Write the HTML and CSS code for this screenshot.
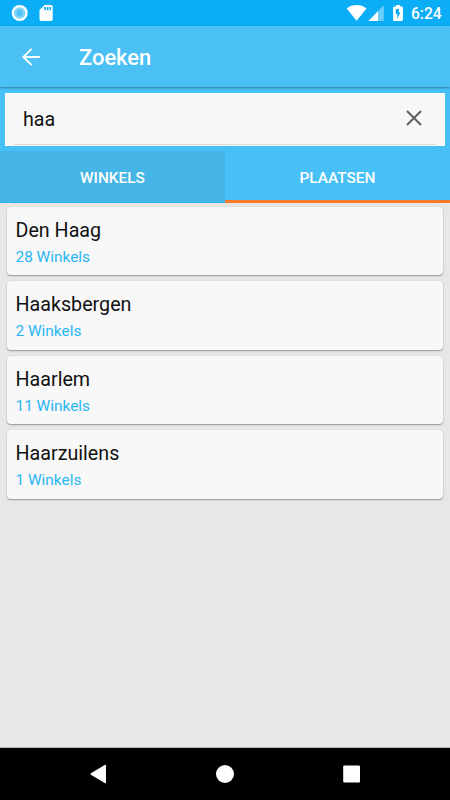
FILE: index.html
```html
<!DOCTYPE html>
<html lang="nl">
<head>
<meta charset="utf-8">
<title>Zoeken</title>
<link rel="stylesheet" href="styles.css">
</head>
<body>
<div class="screen">
  <div class="status">
    <svg class="status-left" width="60" height="26" viewBox="0 0 60 26">
      <circle cx="19.7" cy="13" r="8" fill="#fff"/>
      <circle cx="19.7" cy="13" r="5.8" fill="#81d4fa"/>
      <circle cx="19.7" cy="13" r="3.2" fill="#4fc3f7"/>
      <path fill="#fff" fill-rule="evenodd" d="M44.6 5H51q1.7 0 1.7 1.7v12.6q0 1.7-1.7 1.7H41.2q-1.7 0-1.7-1.7V10.1zM44.3 7v3.3h1.6V7zM46.9 7v3.3h1.6V7zM49.5 7v3.3h1.6V7z"/>
    </svg>
    <svg class="status-right" width="66" height="26" viewBox="345 0 66 26">
      <path fill="#fff" d="M356.6 20.7 346.7 8.5Q351 5.1 356.6 5.1T366.5 8.5z"/>
      <path fill="#6dcdf9" d="M383.8 5.3V20.9H368.4z"/>
      <path fill="#fff" d="M378 11.2V20.9H368.4z"/>
      <path fill="#fff" fill-rule="evenodd" d="M396 5h4.2v1.5h1.5q1.2 0 1.2 1.2v12q0 1.2-1.2 1.2h-7.4q-1.2 0-1.2-1.2v-12q0-1.2 1.2-1.2H396zM399 8.9h-3.2v5.2h1.4v4.5l3.3-6.2h-1.7z"/>
    </svg>
    <span class="clock">6:24</span>
  </div>
  <header class="appbar">
    <svg class="back" width="20" height="20" viewBox="0 0 20 20" fill="none" stroke="#fff" stroke-width="1.9"><path d="M18.8 10H2.2M10.7 1.9 2.3 10l8.4 8.1"/></svg>
    <h1>Zoeken</h1>
  </header>
  <div class="search-area">
    <div class="search">
      <span class="query">haa</span>
      <svg class="clear" width="16" height="16" viewBox="0 0 16 16" fill="none" stroke="#606060" stroke-width="2"><path d="M1 1l14 14M15 1 1 15"/></svg>
    </div>
  </div>
  <nav class="tabs">
    <div class="tab tab-idle">WINKELS</div>
    <div class="tab tab-active">PLAATSEN</div>
  </nav>
  <main class="list">
    <div class="card"><div class="place">Den Haag</div><div class="count">28 Winkels</div></div>
    <div class="card"><div class="place">Haaksbergen</div><div class="count">2 Winkels</div></div>
    <div class="card"><div class="place">Haarlem</div><div class="count">11 Winkels</div></div>
    <div class="card"><div class="place">Haarzuilens</div><div class="count">1 Winkels</div></div>
  </main>
  <footer class="navbar">
    <svg width="450" height="52" viewBox="0 0 450 52" fill="#fff">
      <path d="M104.7 17q1.3-.7 1.3.7v16.7q0 1.4-1.3.7L90.9 26.8q-1.2-.8 0-1.6z"/>
      <circle cx="225" cy="26" r="9"/>
      <rect x="343.2" y="17.6" width="16.8" height="16.8" rx="1"/>
    </svg>
  </footer>
</div>
</body>
</html>
```
FILE: styles.css
```css
* { box-sizing: border-box; }
body { margin: 0; font-family: Roboto, "Liberation Sans", sans-serif; }
.screen {
  width: 450px;
  height: 800px;
  display: flex;
  flex-direction: column;
  background: #e7e7e7;
  overflow: hidden;
}
.status {
  height: 26px;
  flex: none;
  display: flex;
  background: #0badf7;
}
.status-right { margin-left: auto; }
.clock {
  width: 39px;
  color: #fff;
  font-size: 15.6px;
  font-weight: 500;
  line-height: 29px;
}
.appbar {
  height: 61px;
  flex: none;
  display: flex;
  align-items: center;
  padding-left: 21px;
  background: #4ac0f5;
  box-shadow: 0 1px 2px rgba(0, 0, 0, .35);
  position: relative;
}
.appbar h1 {
  margin: 3px 0 0 38px;
  color: #fff;
  font-size: 21.9px;
  line-height: 26px;
  font-weight: 500;
}
.search-area {
  height: 64px;
  flex: none;
  padding: 6px 5px 0;
  background: #47c0f6;
}
.search {
  height: 52.5px;
  display: flex;
  align-items: center;
  justify-content: space-between;
  padding: 0 22px 0 17px;
  background: linear-gradient(#dcdcdc, #dcdcdc) 8px 50px / 422px 1px no-repeat #f8f8f8;
  border: 1px solid #fff;
}
.query { margin-top: 1px; font-size: 19.7px; line-height: 24px; color: #111; }
.clear { margin-bottom: 2px; }
.tabs { height: 52px; flex: none; display: flex; }
.tab {
  width: 225px;
  color: #fff;
  font-size: 15.4px;
  font-weight: 500;
  line-height: 54px;
  text-align: center;
}
.tab-idle { background: #45b5e6; border-bottom: 1px solid #29b3ef; }
.tab-active { background: #47c0f6; border-bottom: 3px solid #fb7a29; }
.list {
  flex: 1;
  display: flex;
  flex-direction: column;
  gap: 6px;
  padding: 3.7px 7px 0;
}
.card {
  height: 68.6px;
  padding: 11px 8.5px 0;
  background: #f8f8f8;
  border-radius: 4px;
  box-shadow: 0 1px 1.5px rgba(0, 0, 0, .35), 0 0 1px rgba(0, 0, 0, .12);
}
.place { font-size: 19.7px; line-height: 26px; color: #111; }
.count { margin-top: 3px; font-size: 15.4px; line-height: 21px; color: #29b6f3; }
.navbar { height: 52px; flex: none; background: #000; box-shadow: 0 -1px #b8b8b8; }
.navbar svg { display: block; }
```
